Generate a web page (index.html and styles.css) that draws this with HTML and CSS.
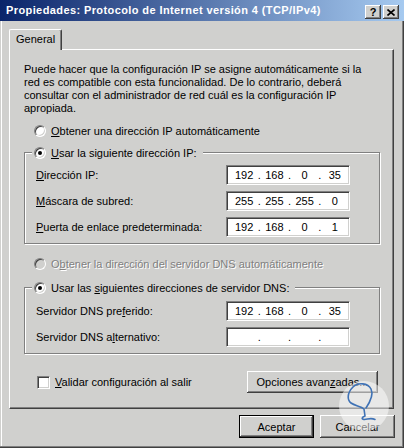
FILE: index.html
```html
<!DOCTYPE html>
<html lang="es">
<head>
<meta charset="utf-8">
<title>Propiedades</title>
<link rel="stylesheet" href="styles.css">
</head>
<body>
<div class="window">
  <div class="titlebar">
    <span class="title">Propiedades: Protocolo de Internet versión 4 (TCP/IPv4)</span>
    <div class="tbtns">
      <span class="tbtn help">?</span>
      <span class="tbtn close"><svg width="8" height="7" viewBox="0 0 8 7"><path d="M0.5 0.5 L7.5 6.5 M7.5 0.5 L0.5 6.5" stroke="#000" stroke-width="1.6" fill="none"/></svg></span>
    </div>
  </div>

  <div class="tabs"><div class="tab">General</div></div>

  <div class="panel">
    <p class="intro">Puede hacer que la configuración IP se asigne automáticamente si la<br>red es compatible con esta funcionalidad. De lo contrario, deberá<br>consultar con el administrador de red cuál es la configuración IP<br>apropiada.</p>

    <div class="opt first"><span class="radio"></span><span><u>O</u>btener una dirección IP automáticamente</span></div>

    <fieldset class="group group-ip">
      <legend class="legend"><span class="radio on"></span><span><u>U</u>sar la siguiente dirección IP:</span></legend>
      <div class="row"><span><u>D</u>irección IP:</span>
        <div class="ip"><span class="oct">192</span><span class="dot">.</span><span class="oct">168</span><span class="dot">.</span><span class="oct">0</span><span class="dot">.</span><span class="oct">35</span></div></div>
      <div class="row"><span><u>M</u>áscara de subred:</span>
        <div class="ip"><span class="oct">255</span><span class="dot">.</span><span class="oct">255</span><span class="dot">.</span><span class="oct">255</span><span class="dot">.</span><span class="oct">0</span></div></div>
      <div class="row"><span><u>P</u>uerta de enlace predeterminada:</span>
        <div class="ip"><span class="oct">192</span><span class="dot">.</span><span class="oct">168</span><span class="dot">.</span><span class="oct">0</span><span class="dot">.</span><span class="oct">1</span></div></div>
    </fieldset>

    <div class="opt disabled"><span class="radio off"></span><span>O<u>b</u>tener la dirección del servidor DNS automáticamente</span></div>

    <fieldset class="group group-dns">
      <legend class="legend"><span class="radio on"></span><span>Usar las <u>s</u>iguientes direcciones de servidor DNS:</span></legend>
      <div class="row"><span>Servidor DNS pre<u>f</u>erido:</span>
        <div class="ip"><span class="oct">192</span><span class="dot">.</span><span class="oct">168</span><span class="dot">.</span><span class="oct">0</span><span class="dot">.</span><span class="oct">35</span></div></div>
      <div class="row"><span>Servidor DNS a<u>l</u>ternativo:</span>
        <div class="ip"><span class="oct"></span><span class="dot">.</span><span class="oct"></span><span class="dot">.</span><span class="oct"></span><span class="dot">.</span><span class="oct"></span></div></div>
    </fieldset>

    <div class="bottom">
      <div class="check"><span class="box"></span><span><u>V</u>alidar configuración al salir</span></div>
      <div class="btn wide">Opciones avan<u>z</u>adas...</div>
    </div>
  </div>

  <div class="actions">
    <div class="btn default">Aceptar</div>
    <div class="btn">Cancelar</div>
  </div>

  <svg class="watermark" width="50" height="50" viewBox="0 0 50 50">
    <circle cx="25" cy="25" r="25" fill="#ffffff" fill-opacity="0.5"/>
    <path d="M27 27 C31 21, 35 14, 32 8 C29 2, 19 1, 14 6 C8 12, 8 19, 12 22 C16 25, 22 25, 25 28 L26 35 C23 36, 22 38, 25 38.5 C28 39, 31 36, 36 38.5" fill="none" stroke="#3f72b5" stroke-width="1.6" stroke-linecap="round" stroke-linejoin="round"/>
  </svg>
</div>
</body>
</html>
```

FILE: styles.css
```css
* { box-sizing: border-box; }

html, body {
  margin: 0;
  padding: 0;
}

body {
  width: 404px;
  height: 448px;
  overflow: hidden;
  background: #d0d0ce;
  font-family: "Liberation Sans", Arial, sans-serif;
  font-size: 11px;
  color: #000;
}

.window {
  position: relative;
  width: 404px;
  height: 448px;
  background: #d0d0ce;
  box-shadow: inset -1px -1px #404040, inset -2px -2px #808080, inset 1px 0 #d0d0ce, inset 2px 0 #fff;
}

/* Title bar */
.titlebar {
  display: flex;
  align-items: center;
  justify-content: space-between;
  height: 21px;
  padding: 0 5px 0 6px;
  background: linear-gradient(to right, #0a246a, #a6caf0);
  color: #fff;
  font-weight: bold;
  white-space: nowrap;
}

.title {
  line-height: 13px;
  letter-spacing: 0.4px;
}

.tbtns {
  display: flex;
  gap: 2px;
  align-self: flex-start;
  margin-top: 5px;
}

.tbtn {
  display: flex;
  align-items: center;
  justify-content: center;
  width: 16px;
  height: 14px;
  background: #d0d0ce;
  color: #000;
  font-size: 11px;
  font-weight: bold;
  line-height: 12px;
  box-shadow: inset -1px -1px #404040, inset 1px 1px #fff, inset -2px -2px #808080;
}

/* Tab */
.tabs {
  display: flex;
  padding: 8px 0 0 9px;
}

.tab {
  position: relative;
  z-index: 1;
  width: 53px;
  height: 21px;
  margin-bottom: -1px;
  padding-left: 6px;
  line-height: 18px;
  background: #d0d0ce;
  border-top: 1px solid #fff;
  border-left: 1px solid #fff;
  border-right: 1px solid #404040;
  border-radius: 2px 2px 0 0;
  box-shadow: inset -1px 0 #808080;
}

/* Panel */
.panel {
  display: flex;
  flex-direction: column;
  height: 360px;
  margin: 0 10px 0 9px;
  padding: 13px 13px 0 14px;
  border-top: 1px solid #fff;
  border-left: 1px solid #fff;
  border-right: 1px solid #404040;
  border-bottom: 1px solid #404040;
  box-shadow: inset -1px -1px #808080;
}

.intro {
  margin: 0;
  line-height: 13px;
  white-space: nowrap;
}

.opt {
  display: flex;
  align-items: center;
  gap: 5px;
  height: 16px;
  padding-left: 10px;
  white-space: nowrap;
}

.opt.first { margin-top: 8px; }
.opt.disabled {
  margin-top: 12px;
  color: #808080;
  text-shadow: 1px 1px #fff;
}

.radio {
  position: relative;
  flex: none;
  width: 12px;
  height: 12px;
  border-radius: 50%;
  background: #fff;
  border: 1px solid;
  border-color: #808080 #fff #fff #808080;
  box-shadow: inset 1px 1px #404040, inset -1px -1px #d0d0ce;
}

.radio.off { background: #d0d0ce; }

.radio.on::after {
  content: "";
  position: absolute;
  left: 3px;
  top: 3px;
  width: 4px;
  height: 4px;
  border-radius: 50%;
  background: #000;
}

/* Group boxes */
.group {
  min-width: 0;
  margin: 6px 0 0;
  padding: 5px 29px 6px 11px;
  border: 1px solid #808080;
  box-shadow: inset 1px 1px #fff, 1px 1px #fff;
}

.group-dns {
  margin-top: 8px;
  padding-top: 6px;
}

.legend {
  display: flex;
  align-items: center;
  gap: 5px;
  height: 15px;
  margin-left: -4px;
  padding: 0 6px 0 2px;
  background: #d0d0ce;
  white-space: nowrap;
}

.row {
  display: flex;
  align-items: center;
  justify-content: space-between;
  height: 20px;
  white-space: nowrap;
}

.row + .row { margin-top: 6px; }

.ip {
  display: flex;
  align-items: center;
  width: 124px;
  height: 20px;
  padding: 0 1px 0 4px;
  background: #fff;
  border: 1px solid;
  border-color: #808080 #fff #fff #808080;
  box-shadow: inset 1px 1px #404040, inset -1px -1px #d0d0ce;
}

.oct {
  flex: 1;
  text-align: center;
}

.dot {
  width: 4px;
  text-align: center;
}

/* Bottom row */
.bottom {
  display: flex;
  align-items: center;
  justify-content: space-between;
  height: 22px;
  margin-top: 17px;
  padding: 0 2px 0 13px;
}

.check {
  display: flex;
  align-items: center;
  gap: 5px;
  white-space: nowrap;
}

.box {
  flex: none;
  width: 13px;
  height: 13px;
  background: #fff;
  border: 1px solid;
  border-color: #808080 #fff #fff #808080;
  box-shadow: inset 1px 1px #404040, inset -1px -1px #d0d0ce;
}

.btn {
  display: flex;
  align-items: center;
  justify-content: center;
  width: 75px;
  height: 23px;
  background: #d0d0ce;
  white-space: nowrap;
  box-shadow: inset -1px -1px #404040, inset 1px 1px #fff, inset -2px -2px #808080;
}

.btn.wide {
  width: 131px;
  height: 22px;
}

.btn.default {
  border: 1px solid #000;
}

.actions {
  display: flex;
  justify-content: flex-end;
  gap: 6px;
  margin-top: 6px;
  padding-right: 9px;
}

.watermark {
  position: absolute;
  left: 339px;
  top: 381px;
  overflow: visible;
}
```
